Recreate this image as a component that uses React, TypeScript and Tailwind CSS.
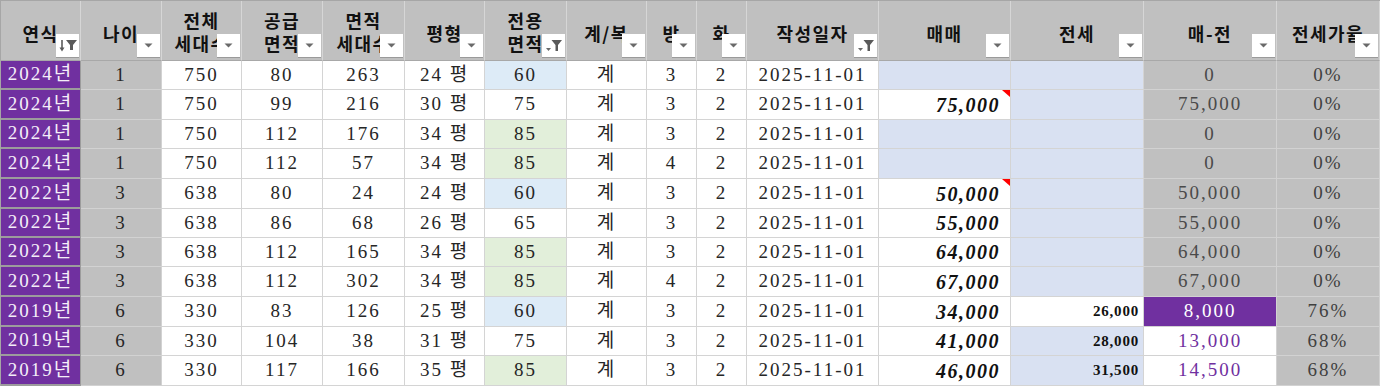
import React from "react";

type Kind = "dd" | "filter" | "sortfilter";

const COLS: { w: string; lines: string[]; kind: Kind }[] = [
  { w: "w-[80px]", lines: ["연식"], kind: "sortfilter" },
  { w: "w-[81px]", lines: ["나이"], kind: "dd" },
  { w: "w-[80px]", lines: ["전체", "세대수"], kind: "dd" },
  { w: "w-[81px]", lines: ["공급", "면적"], kind: "dd" },
  { w: "w-[82px]", lines: ["면적", "세대수"], kind: "dd" },
  { w: "w-[80px]", lines: ["평형"], kind: "dd" },
  { w: "w-[82px]", lines: ["전용", "면적"], kind: "filter" },
  { w: "w-[80px]", lines: ["계/복"], kind: "dd" },
  { w: "w-[50px]", lines: ["방"], kind: "dd" },
  { w: "w-[50px]", lines: ["화"], kind: "dd" },
  { w: "w-[132px]", lines: ["작성일자"], kind: "filter" },
  { w: "w-[132px]", lines: ["매매"], kind: "dd" },
  { w: "w-[133px]", lines: ["전세"], kind: "dd" },
  { w: "w-[133px]", lines: ["매-전"], kind: "dd" },
  { w: "w-[103px]", lines: ["전세가율"], kind: "dd" },
];

const ROW_H = [
  "h-[29px]",
  "h-[30px]",
  "h-[29px]",
  "h-[30px]",
  "h-[30px]",
  "h-[29px]",
  "h-[29px]",
  "h-[30px]",
  "h-[30px]",
  "h-[29px]",
  "h-[30px]",
];

type Row = {
  year: string;
  age: string;
  total: string;
  supply: string;
  areaUnits: string;
  pyeong: string;
  excl: string;
  exclBg: string;
  type: string;
  rooms: string;
  baths: string;
  date: string;
  sale: string;
  comment: boolean;
  jeonse: string;
  jeonseBg: string;
  diff: string;
  diffMode: "gray" | "purple" | "white";
  ratio: string;
};

const BLUE = "bg-[#ddebf7]";
const GREEN = "bg-[#e2efda]";
const WHITE = "bg-white";
const LB = "bg-[#d9e1f2]";

const ROWS: Row[] = [
  { year: "2024년", age: "1", total: "750", supply: "80", areaUnits: "263", pyeong: "24 평", excl: "60", exclBg: BLUE, type: "계", rooms: "3", baths: "2", date: "2025-11-01", sale: "", comment: false, jeonse: "", jeonseBg: LB, diff: "0", diffMode: "gray", ratio: "0%" },
  { year: "2024년", age: "1", total: "750", supply: "99", areaUnits: "216", pyeong: "30 평", excl: "75", exclBg: WHITE, type: "계", rooms: "3", baths: "2", date: "2025-11-01", sale: "75,000", comment: true, jeonse: "", jeonseBg: LB, diff: "75,000", diffMode: "gray", ratio: "0%" },
  { year: "2024년", age: "1", total: "750", supply: "112", areaUnits: "176", pyeong: "34 평", excl: "85", exclBg: GREEN, type: "계", rooms: "3", baths: "2", date: "2025-11-01", sale: "", comment: false, jeonse: "", jeonseBg: LB, diff: "0", diffMode: "gray", ratio: "0%" },
  { year: "2024년", age: "1", total: "750", supply: "112", areaUnits: "57", pyeong: "34 평", excl: "85", exclBg: GREEN, type: "계", rooms: "4", baths: "2", date: "2025-11-01", sale: "", comment: false, jeonse: "", jeonseBg: LB, diff: "0", diffMode: "gray", ratio: "0%" },
  { year: "2022년", age: "3", total: "638", supply: "80", areaUnits: "24", pyeong: "24 평", excl: "60", exclBg: BLUE, type: "계", rooms: "3", baths: "2", date: "2025-11-01", sale: "50,000", comment: true, jeonse: "", jeonseBg: LB, diff: "50,000", diffMode: "gray", ratio: "0%" },
  { year: "2022년", age: "3", total: "638", supply: "86", areaUnits: "68", pyeong: "26 평", excl: "65", exclBg: WHITE, type: "계", rooms: "3", baths: "2", date: "2025-11-01", sale: "55,000", comment: false, jeonse: "", jeonseBg: LB, diff: "55,000", diffMode: "gray", ratio: "0%" },
  { year: "2022년", age: "3", total: "638", supply: "112", areaUnits: "165", pyeong: "34 평", excl: "85", exclBg: GREEN, type: "계", rooms: "3", baths: "2", date: "2025-11-01", sale: "64,000", comment: false, jeonse: "", jeonseBg: LB, diff: "64,000", diffMode: "gray", ratio: "0%" },
  { year: "2022년", age: "3", total: "638", supply: "112", areaUnits: "302", pyeong: "34 평", excl: "85", exclBg: GREEN, type: "계", rooms: "4", baths: "2", date: "2025-11-01", sale: "67,000", comment: false, jeonse: "", jeonseBg: LB, diff: "67,000", diffMode: "gray", ratio: "0%" },
  { year: "2019년", age: "6", total: "330", supply: "83", areaUnits: "126", pyeong: "25 평", excl: "60", exclBg: BLUE, type: "계", rooms: "3", baths: "2", date: "2025-11-01", sale: "34,000", comment: false, jeonse: "26,000", jeonseBg: WHITE, diff: "8,000", diffMode: "purple", ratio: "76%" },
  { year: "2019년", age: "6", total: "330", supply: "104", areaUnits: "38", pyeong: "31 평", excl: "75", exclBg: WHITE, type: "계", rooms: "3", baths: "2", date: "2025-11-01", sale: "41,000", comment: false, jeonse: "28,000", jeonseBg: LB, diff: "13,000", diffMode: "white", ratio: "68%" },
  { year: "2019년", age: "6", total: "330", supply: "117", areaUnits: "166", pyeong: "35 평", excl: "85", exclBg: GREEN, type: "계", rooms: "3", baths: "2", date: "2025-11-01", sale: "46,000", comment: false, jeonse: "31,500", jeonseBg: LB, diff: "14,500", diffMode: "white", ratio: "68%" },
];

function Tri() {
  return (
    <svg width="9" height="5" viewBox="0 0 9 5">
      <path d="M0.5 0.5 L8.5 0.5 L4.5 4.5 Z" fill="#6a6a6a" />
    </svg>
  );
}

function FilterIcon() {
  return (
    <svg width="18" height="16" viewBox="0 0 18 16">
      <path d="M1 10 L6 10 L3.5 13 Z" fill="#6a6a6a" />
      <path d="M6.5 2 L17 2 L13 7 L13 13 L10.5 13 L10.5 7 Z" fill="#5a5a5a" />
    </svg>
  );
}

function SortFilterIcon() {
  return (
    <svg width="20" height="18" viewBox="0 0 20 18">
      <path d="M4 3 L4 13" stroke="#5a5a5a" strokeWidth="1.6" />
      <path d="M1.5 10.5 L4 14.5 L6.5 10.5 Z" fill="#5a5a5a" />
      <path d="M8 3 L19 3 L15 8 L15 13 L12 13 L12 8 Z" fill="#5a5a5a" />
    </svg>
  );
}

function FilterButton({ kind }: { kind: Kind }) {
  return (
    <div className="absolute right-[1px] bottom-[2px] w-[23px] h-[24px] bg-white border-b border-[#9a9a9a] flex items-center justify-center">
      {kind === "dd" && <Tri />}
      {kind === "filter" && <FilterIcon />}
      {kind === "sortfilter" && <SortFilterIcon />}
    </div>
  );
}

function HeaderCell({ w, lines, kind }: { w: string; lines: string[]; kind: Kind }) {
  return (
    <div
      className={`${w} relative h-full shrink-0 bg-[#c0c0c0] border-r border-b border-r-[#d6d6d6] border-b-[#a8a8a8] flex flex-col items-center justify-center overflow-hidden ${
        lines.length === 1 ? "pt-[6px]" : "pt-[3px]"
      }`}
    >
      {lines.map((l) => (
        <div key={l} className="leading-[23px] whitespace-nowrap tracking-[1.5px]">
          {l}
        </div>
      ))}
      <FilterButton kind={kind} />
    </div>
  );
}

function Cell({
  w,
  bg,
  children,
  align = "center",
  extra = "",
  border = "border-[#d4d4d4]",
}: {
  w: string;
  bg: string;
  children?: React.ReactNode;
  align?: "center" | "right";
  extra?: string;
  border?: string;
}) {
  return (
    <div
      className={`${w} ${bg} ${border} ${extra} relative h-full shrink-0 border-r border-b flex items-center whitespace-nowrap ${
        align === "center" ? "justify-center" : "justify-end"
      }`}
    >
      {children}
    </div>
  );
}

export default function App() {
  return (
    <div className="w-[1383px] h-[387px] bg-white overflow-hidden">
      <div className="w-fit border-t border-l border-[#a6a6a6] font-['Liberation_Serif','Noto_Sans_CJK_KR',serif] text-[#262626]">
        <div className="flex h-[60px] font-['Noto_Sans_CJK_KR',sans-serif] font-bold text-[18px] text-[#111]">
          {COLS.map((c) => (
            <HeaderCell key={c.lines.join("")} w={c.w} lines={c.lines} kind={c.kind} />
          ))}
        </div>
        {ROWS.map((r, i) => (
          <div key={i} className={`flex ${ROW_H[i]} text-[19px] tracking-[2px]`}>
            <Cell
              w="w-[80px]"
              bg="bg-[#7030a0]"
              border="border-[#9c9c9c]"
              extra="text-[#f4eef8] border-b-2"
            >
              {r.year}
            </Cell>
            <Cell w="w-[81px]" bg="bg-[#c0c0c0]" border="border-[#d2d2d2]">
              {r.age}
            </Cell>
            <Cell w="w-[80px]" bg="bg-white">{r.total}</Cell>
            <Cell w="w-[81px]" bg="bg-white">{r.supply}</Cell>
            <Cell w="w-[82px]" bg="bg-white">{r.areaUnits}</Cell>
            <Cell w="w-[80px]" bg="bg-white">{r.pyeong}</Cell>
            <Cell w="w-[82px]" bg={r.exclBg}>{r.excl}</Cell>
            <Cell w="w-[80px]" bg="bg-white">{r.type}</Cell>
            <Cell w="w-[50px]" bg="bg-white">{r.rooms}</Cell>
            <Cell w="w-[50px]" bg="bg-white">{r.baths}</Cell>
            <Cell w="w-[132px]" bg="bg-white">{r.date}</Cell>
            <Cell
              w="w-[132px]"
              bg={r.sale ? "bg-white" : "bg-[#d9e1f2]"}
              align="right"
              extra="pr-[10px] italic font-bold text-[20px] tracking-[1.5px] text-[#111]"
            >
              {r.sale}
              {r.comment && (
                <svg className="absolute top-0 right-0" width="8" height="7" viewBox="0 0 8 7">
                  <path d="M0 0 L8 0 L8 7 Z" fill="#ff0000" />
                </svg>
              )}
            </Cell>
            <Cell
              w="w-[133px]"
              bg={r.jeonseBg}
              align="right"
              extra="pr-[4px] font-bold text-[15px] tracking-[0.8px] text-[#111]"
            >
              {r.jeonse}
            </Cell>
            {r.diffMode === "gray" && (
              <Cell w="w-[133px]" bg="bg-[#c0c0c0]" border="border-[#d2d2d2]" extra="text-[#4a4a4a]">
                {r.diff}
              </Cell>
            )}
            {r.diffMode === "purple" && (
              <Cell w="w-[133px]" bg="bg-[#7030a0]" border="border-[#d2d2d2]" extra="text-white">
                {r.diff}
              </Cell>
            )}
            {r.diffMode === "white" && (
              <Cell w="w-[133px]" bg="bg-white" border="border-[#d2d2d2]" extra="text-[#7030a0]">
                {r.diff}
              </Cell>
            )}
            <Cell w="w-[103px]" bg="bg-[#c0c0c0]" border="border-[#d2d2d2]" extra="text-[#404040]">
              {r.ratio}
            </Cell>
          </div>
        ))}
      </div>
    </div>
  );
}
